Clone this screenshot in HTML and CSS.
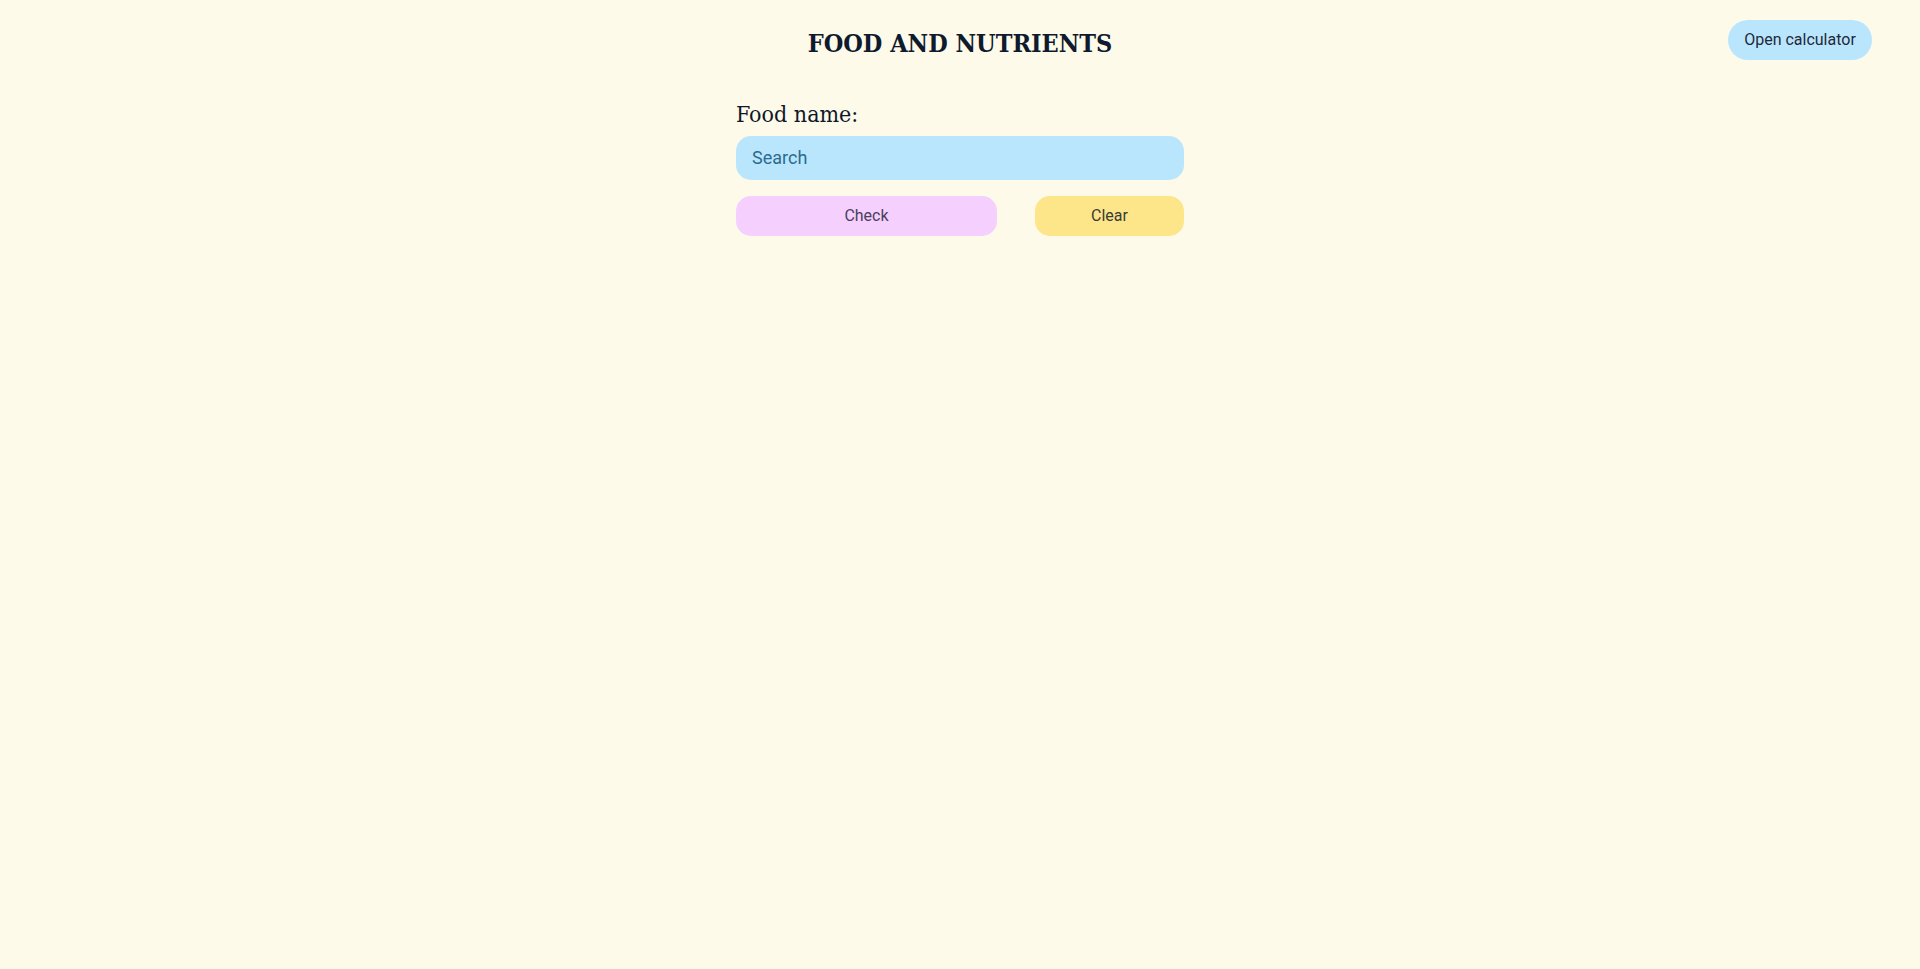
FILE: index.html
```html
<!DOCTYPE html>
<html lang="en">
<head>
<meta charset="utf-8">
<title>Food and Nutrients</title>
<link rel="stylesheet" href="styles.css">
</head>
<body>
<header class="header">
  <div class="spacer"></div>
  <h1 class="title">FOOD AND NUTRIENTS</h1>
  <button class="calc-btn" type="button">Open calculator</button>
</header>
<main class="form">
  <label class="label" for="food">Food name:</label>
  <input class="search" id="food" type="text" placeholder="Search">
  <div class="actions">
    <button class="btn btn-check" type="button">Check</button>
    <button class="btn btn-clear" type="button">Clear</button>
  </div>
</main>
</body>
</html>
```

FILE: styles.css
```css
* { box-sizing: border-box; }
html { background: #fefae9; }
html, body { margin: 0; padding: 0; }
body {
  color: #0f172a;
  font-family: Roboto, "Liberation Sans", sans-serif;
}
.header {
  display: grid;
  grid-template-columns: 1fr auto 1fr;
  align-items: start;
  padding: 20px 48px 0 48px;
}
.title {
  margin: 0;
  padding-top: 4px;
  font-family: "DejaVu Serif Condensed", "DejaVu Serif", serif;
  font-stretch: condensed;
  font-weight: bold;
  font-size: 25px;
  line-height: 40px;
  color: #0f1a2e;
}
.calc-btn {
  justify-self: end;
  height: 40px;
  width: 144px;
  border: none;
  border-radius: 20px;
  background: #bae6fd;
  color: #1e293b;
  font-family: Roboto, sans-serif;
  font-size: 16px;
  padding: 0 0 2px 0;
}
.form {
  width: 448px;
  margin: 0 auto;
  padding-top: 32px;
  display: flex;
  flex-direction: column;
}
.label {
  font-family: "DejaVu Serif Condensed", "DejaVu Serif", serif;
  font-stretch: condensed;
  font-size: 23px;
  line-height: 36px;
  color: #0f172a;
}
.search {
  margin-top: 4px;
  height: 44px;
  border: none;
  border-radius: 15px;
  background: #bae6fd;
  padding: 0 16px 2px 16px;
  font-family: Roboto, sans-serif;
  font-size: 18px;
  color: #0f172a;
  outline: none;
}
.search::placeholder { color: #2a6c8e; }
.actions {
  display: flex;
  justify-content: space-between;
  margin-top: 16px;
}
.btn {
  height: 40px;
  border: none;
  border-radius: 15px;
  font-family: Roboto, sans-serif;
  font-size: 16px;
  padding: 0 0 2px 0;
}
.btn-check { width: 261px; background: #f5d0fe; color: #4a3f5c; }
.btn-clear { width: 149px; background: #fde68a; color: #3b3a35; }
```
